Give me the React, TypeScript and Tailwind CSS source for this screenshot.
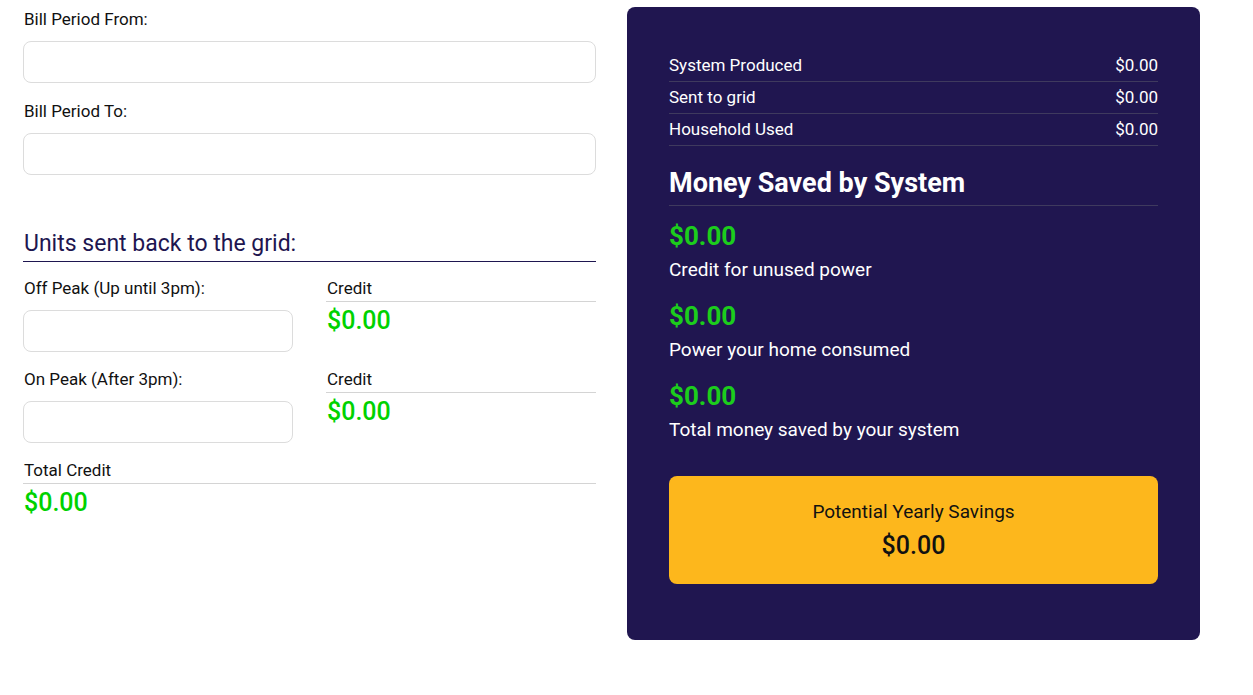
import React from "react";

const rows = [
  { label: "System Produced", value: "$0.00" },
  { label: "Sent to grid", value: "$0.00" },
  { label: "Household Used", value: "$0.00" },
];

const savings = [
  "Credit for unused power",
  "Power your home consumed",
  "Total money saved by your system",
];

function Field({ label, className = "" }: { label: string; className?: string }) {
  return (
    <div className={className}>
      <label className="block pl-px text-[17px] leading-[22px] text-[#111]">{label}</label>
      <input className="mt-[11px] block h-[42px] w-full rounded-lg border border-[#dcdcdc] bg-white px-3 outline-none" />
    </div>
  );
}

function Credit({ label }: { label: string }) {
  return (
    <div>
      <div className="border-b border-[#d4d4d4] pb-[2px] pl-px text-[17px] leading-[22px] text-[#111]">{label}</div>
      <div className="pl-px text-[25px] leading-[38px] font-medium text-[#00d200]">$0.00</div>
    </div>
  );
}

export default function App() {
  return (
    <div className="flex gap-[31px] bg-white pl-[23px] pt-[7px] font-['Roboto',sans-serif]">
      {/* Left: form */}
      <div className="w-[573px]">
        <Field label="Bill Period From:" className="pt-[1px]" />
        <Field label="Bill Period To:" className="mt-[17px]" />

        <h3 className="mt-[54px] border-b border-[#1e1650] pb-[2px] pl-px text-[23px] leading-[30px] text-[#1e1650]">
          Units sent back to the grid:
        </h3>

        <div className="mt-[15px] grid grid-cols-[270px_1fr] gap-x-[33px] gap-y-[16px]">
          <Field label="Off Peak (Up until 3pm):" />
          <Credit label="Credit" />
          <Field label="On Peak (After 3pm):" />
          <Credit label="Credit" />
        </div>

        <div className="mt-[16px]">
          <Credit label="Total Credit" />
        </div>
      </div>

      {/* Right: results panel */}
      <div className="h-[633px] w-[573px] rounded-lg bg-[#201650] px-[42px] pt-[43px] text-white">
        {rows.map((r) => (
          <div
            key={r.label}
            className="flex h-[32px] items-center justify-between border-b border-[#3f3a5e] text-[17px]"
          >
            <span>{r.label}</span>
            <span>{r.value}</span>
          </div>
        ))}

        <h2 className="mt-[20px] border-b border-[#3f3a5e] pb-[5px] text-[27px] leading-[34px] font-bold">
          Money Saved by System
        </h2>

        <div className="mt-[14px] flex flex-col gap-[14px]">
          {savings.map((s) => (
            <div key={s}>
              <div className="text-[26px] leading-[32px] font-bold text-[#1ccd1c]">$0.00</div>
              <div className="mt-[2px] text-[19px] leading-[32px]">{s}</div>
            </div>
          ))}
        </div>

        <div className="mt-[30px] flex h-[108px] flex-col items-center justify-center rounded-lg bg-[#fdb71c] text-[#111]">
          <div className="text-[19px] leading-[26px]">Potential Yearly Savings</div>
          <div className="mt-[6px] text-[25px] leading-[30px] font-medium">$0.00</div>
        </div>
      </div>
    </div>
  );
}
